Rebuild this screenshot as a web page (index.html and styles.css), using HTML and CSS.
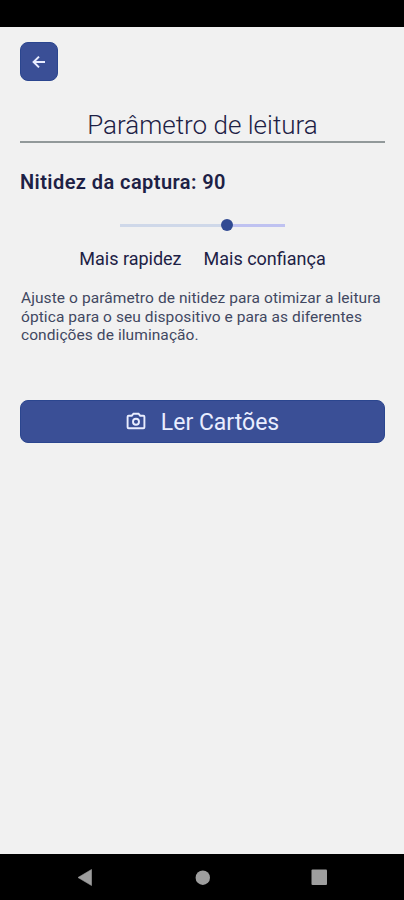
FILE: index.html
```
<!DOCTYPE html>
<html lang="pt-BR">
<head>
  <meta charset="UTF-8">
  <meta name="viewport" content="width=device-width, initial-scale=1.0">
  <title>Parâmetro de leitura</title>
  <link rel="stylesheet" href="styles.css">
</head>
<body>
  <div class="status-bar"></div>

  <main class="content">
    <button class="back-button" aria-label="Voltar">
      <svg width="14" height="14" viewBox="0 0 14 14">
        <path d="M13 7H2M7 1.6L1.6 7L7 12.4" fill="none" stroke="currentColor" stroke-width="2"/>
      </svg>
    </button>

    <h1 class="title">Parâmetro de leitura</h1>

    <h2 class="value-label">Nitidez da captura: 90</h2>

    <div class="slider">
      <div class="track-left"></div>
      <div class="thumb"></div>
      <div class="track-right"></div>
    </div>

    <div class="slider-labels">
      <span>Mais rapidez</span>
      <span>Mais confiança</span>
    </div>

    <p class="description">
      Ajuste o parâmetro de nitidez para otimizar a leitura<br>
      óptica para o seu dispositivo e para as diferentes<br>
      condições de iluminação.
    </p>

    <button class="read-button">
      <svg width="20" height="18" viewBox="0 0 20 18" fill="none" stroke="currentColor" stroke-width="1.9">
        <path d="M2.6 3.7H5.8L7.5 1.7H12.5L14.2 3.7H17.4Q18.4 3.7 18.4 4.7V15.2Q18.4 16.2 17.4 16.2H2.6Q1.6 16.2 1.6 15.2V4.7Q1.6 3.7 2.6 3.7Z"/>
        <circle cx="10" cy="9.8" r="3"/>
      </svg>
      <span>Ler Cartões</span>
    </button>
  </main>

  <nav class="nav-bar">
    <svg width="404" height="47" viewBox="0 0 404 47" fill="#9e9e9e">
      <path d="M78 23.5L91.5 15.5V31.5Z" stroke="#9e9e9e" stroke-width="0.6" stroke-linejoin="round"/>
      <circle cx="202.8" cy="23.7" r="7.2"/>
      <rect x="311.5" y="15.5" width="15.5" height="15.5" rx="1"/>
    </svg>
  </nav>
</body>
</html>
```

FILE: styles.css
```
* {
  box-sizing: border-box;
}
body {
  margin: 0;
  height: 900px;
  display: flex;
  flex-direction: column;
  font-family: Roboto, sans-serif;
  background-color: #f1f1f1;
  color: #1d2145;
  overflow: hidden;
}
button {
  display: flex;
  align-items: center;
  justify-content: center;
  padding: 0;
  border: none;
  font-family: inherit;
  color: #e9edff;
  background-color: #3a4f96;
}
.status-bar {
  height: 26.5px;
  background-color: #000;
}
.content {
  flex: 1;
  padding: 15.5px 19px 0 20px;
}
.back-button {
  width: 38px;
  height: 39px;
  border: 1px solid #2b468f;
  border-radius: 8px;
}
.title {
  height: 62px;
  padding-top: 29px;
  margin: 0;
  border-bottom: 2px solid #92999a;
  font-size: 26px;
  font-weight: 300;
  line-height: 31px;
  text-align: center;
  white-space: nowrap;
}
.value-label {
  margin: 27px 0 0;
  font-size: 20px;
  font-weight: 600;
  line-height: 24px;
  letter-spacing: 0.43px;
}
.slider {
  display: flex;
  align-items: center;
  width: 165px;
  height: 12px;
  margin: 25px 0 0 100px;
}
.track-left {
  width: 101px;
  height: 3px;
  background-color: #cfd8e9;
}
.thumb {
  width: 12px;
  height: 12px;
  border-radius: 50%;
  background-color: #314a93;
}
.track-right {
  flex: 1;
  height: 3px;
  background-color: #bfc2f1;
}
.slider-labels {
  display: flex;
  justify-content: center;
  gap: 22px;
  margin-top: 17px;
  font-size: 18px;
  line-height: 22px;
  white-space: nowrap;
}
.description {
  margin: 19px 0 0;
  padding-left: 1px;
  font-size: 15.5px;
  line-height: 18.5px;
  letter-spacing: 0.08px;
  color: #414861;
  white-space: nowrap;
}
.read-button {
  width: 100%;
  height: 43px;
  margin-top: 55px;
  gap: 15px;
  border: 1px solid #2b468f;
  border-radius: 8px;
  font-size: 23px;
}
.read-button span {
  padding-top: 3px;
}
.nav-bar {
  height: 46.5px;
  background-color: #000;
}
.nav-bar svg {
  display: block;
}
```
